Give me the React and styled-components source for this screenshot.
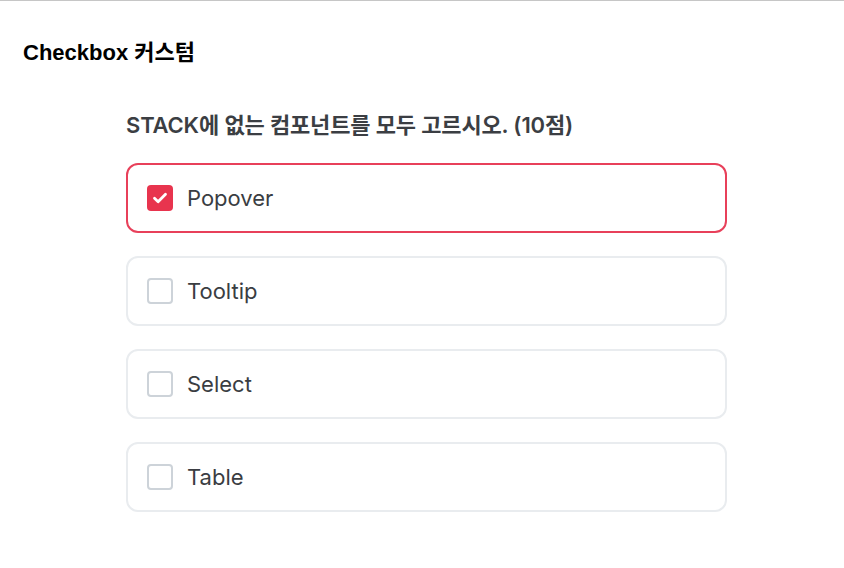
import * as React from "react";
import styled, { createGlobalStyle } from "styled-components";

const GlobalStyle = createGlobalStyle`
  html, body {
    margin: 0;
    padding: 0;
    background: #ffffff;
  }
  body {
    font-family: Inter, "Noto Sans CJK KR", sans-serif;
  }
`;

const Page = styled.div`
  border-top: 1px solid #c6c6c6;
  min-height: 567px;
  padding: 0 0 0 23px;
`;

const Title = styled.h1`
  margin: 0;
  padding-top: 38px;
  font-family: "Liberation Sans", "Noto Sans CJK KR", sans-serif;
  font-size: 22px;
  font-weight: 700;
  line-height: 28px;
  color: #000;
`;

const Quiz = styled.section`
  width: 601px;
  margin: 43px 0 0 103px;
`;

const Question = styled.h2`
  margin: 0 0 23px;
  font-size: 22px;
  font-weight: 600;
  line-height: 30px;
  color: #3b3e43;
  letter-spacing: -0.16px;
`;

const Options = styled.div`
  display: flex;
  flex-direction: column;
  gap: 23px;
`;

const Option = styled.label`
  display: flex;
  align-items: center;
  gap: 14px;
  box-sizing: border-box;
  height: 70px;
  padding: 0 19px;
  border: 2px solid ${(p) => (p.$checked ? "#e8405a" : "#e9ecef")};
  border-radius: 12px;
  cursor: pointer;
`;

const Box = styled.span`
  display: flex;
  align-items: center;
  justify-content: center;
  box-sizing: border-box;
  width: 26px;
  height: 26px;
  border-radius: 4px;
  background: ${(p) => (p.$checked ? "#e8344e" : "#fff")};
  border: ${(p) => (p.$checked ? "none" : "2px solid #cdd3d9")};
`;

const Label = styled.span`
  font-size: 22px;
  font-weight: 400;
  color: #3a3d42;
`;

const items = ["Popover", "Tooltip", "Select", "Table"];

export default function App() {
  const [checked, setChecked] = React.useState(["Popover"]);

  const toggle = (name) =>
    setChecked((c) => (c.includes(name) ? c.filter((x) => x !== name) : [...c, name]));

  return (
    <>
      <GlobalStyle />
      <Page>
        <Title>Checkbox 커스텀</Title>
        <Quiz>
          <Question>STACK에 없는 컴포넌트를 모두 고르시오. (10점)</Question>
          <Options>
            {items.map((name) => {
              const on = checked.includes(name);
              return (
                <Option key={name} $checked={on} onClick={() => toggle(name)}>
                  <Box $checked={on}>
                    {on && (
                      <svg width="20" height="20" viewBox="0 0 20 20" fill="none">
                        <path
                          d="M4.5 10.3l3.6 3.5 7.4-7.6"
                          stroke="#fff"
                          strokeWidth="2.8"
                          strokeLinecap="round"
                          strokeLinejoin="round"
                        />
                      </svg>
                    )}
                  </Box>
                  <Label>{name}</Label>
                </Option>
              );
            })}
          </Options>
        </Quiz>
      </Page>
    </>
  );
}
